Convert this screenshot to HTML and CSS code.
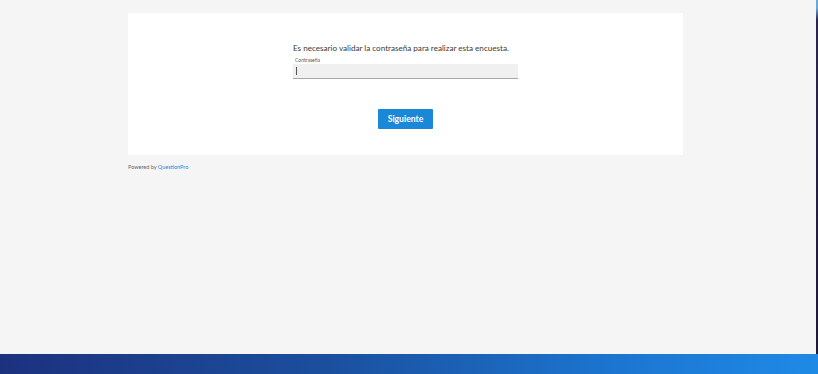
FILE: index.html
```html
<!DOCTYPE html>
<html>
<head>
    <meta charset="UTF-8">
    <meta name="viewport" content="width=device-width, initial-scale=1.0">
    <title>Encuesta</title>
    <link rel="stylesheet" href="styles.css">
</head>
<body>
    <div class="page">
        <div class="main">
            <div class="card">
                <form class="login">
                    <p class="intro">Es necesario validar la contraseña para realizar esta encuesta.</p>
                    <label class="field-label" for="pwd">Contraseña</label>
                    <div class="field"><span class="caret"></span></div>
                    <button type="button" class="next-btn">Siguiente</button>
                </form>
            </div>
            <div class="powered">Powered by <a href="#">QuestionPro</a></div>
        </div>
        <div class="edge"></div>
    </div>
    <div class="taskbar"></div>
</body>
</html>
```

FILE: styles.css
```css
html, body {
    height: 100%;
}
body {
    margin: 0;
    background-color: #f5f5f5;
    font-family: Lato, "Open Sans", Arial, sans-serif;
    display: flex;
    flex-direction: column;
}
.page {
    flex: 1;
    display: flex;
}
.main {
    flex: 1;
    padding-top: 13px;
    padding-left: 128px;
}
.edge {
    width: 2px;
    background: linear-gradient(#6aa8dc 0, #6aa8dc 8px, #2c2550 20px, #1f1838 100%);
}
.card {
    width: 555px;
    height: 142px;
    background-color: #ffffff;
    display: flex;
    justify-content: center;
}
.login {
    width: 225px;
    padding-top: 30px;
    display: flex;
    flex-direction: column;
}
.intro {
    margin: 0;
    font-size: 8.1px;
    color: #3a3a3a;
    white-space: nowrap;
}
.field-label {
    margin-top: 4px;
    font-size: 5px;
    color: #555555;
    padding-left: 2px;
}
.field {
    margin-top: 1px;
    height: 14px;
    background-color: #f0f0f0;
    border-bottom: 1px solid #a8a8a8;
    display: flex;
    align-items: center;
    padding-left: 3px;
}
.caret {
    width: 1px;
    height: 8px;
    background-color: #555555;
}
.next-btn {
    align-self: center;
    margin-top: 30px;
    width: 55px;
    height: 20px;
    border: none;
    border-radius: 1px;
    background-color: #1b87d9;
    color: #ffffff;
    font-family: Lato, "Open Sans", Arial, sans-serif;
    font-weight: bold;
    font-size: 8.6px;
    padding: 0;
}
.powered {
    margin-top: 9px;
    font-size: 5.5px;
    color: #666666;
}
.powered a {
    color: #1b87d9;
    text-decoration: none;
}
.taskbar {
    height: 20px;
    background: linear-gradient(to right, #1c317e, #1b4f9e 40%, #1c75d0 75%, #1e8ae6);
}
```
